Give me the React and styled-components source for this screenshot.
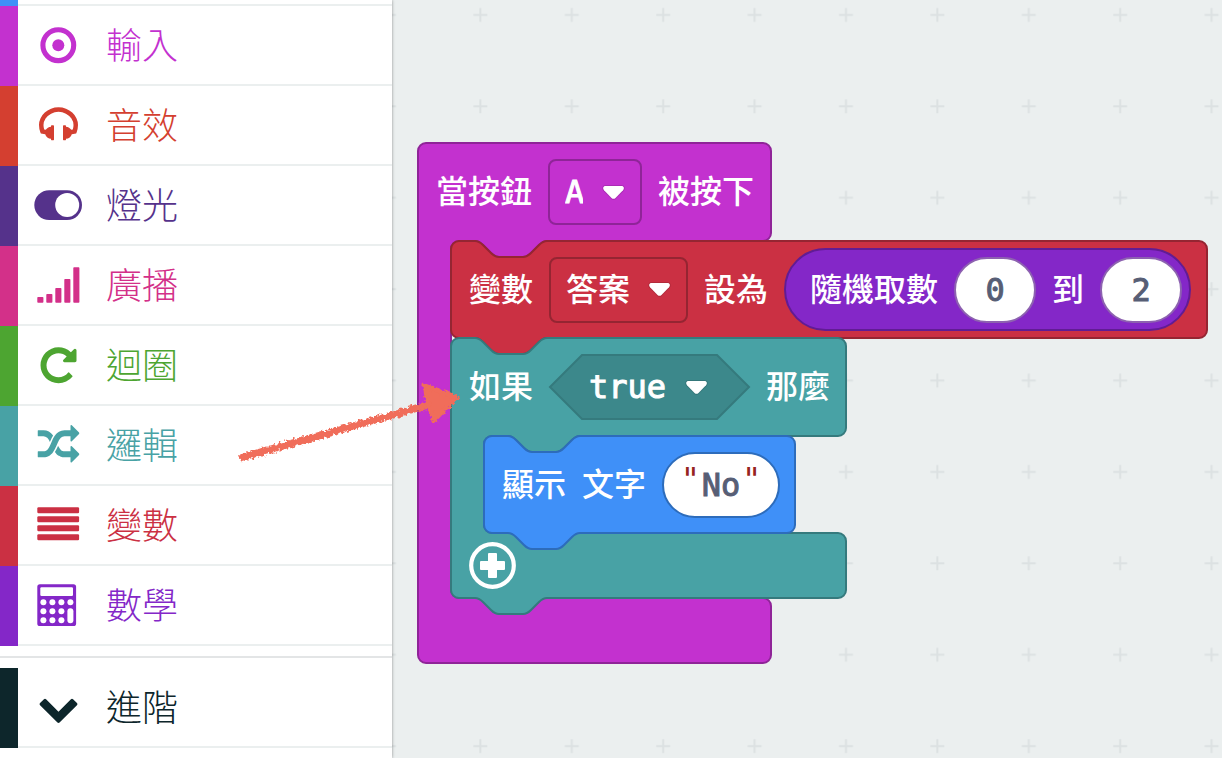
import React from "react";
import styled, { createGlobalStyle } from "styled-components";

const GlobalStyle = createGlobalStyle`
  *, *::before, *::after { box-sizing: border-box; }
  body { margin: 0; background: #ebefef; }
  button, input, select { font: inherit; color: inherit; }
`;

const UI_FONT = `"Noto Sans CJK TC", sans-serif`;
const BLOCK_FONT = `"DejaVu Sans Mono", "Noto Sans CJK TC", monospace`;

const colors = {
  basic: { fill: "#3f90f8", edge: "#2d6cbb" },
  input: { fill: "#c331cf", edge: "#8f2498" },
  music: { fill: "#d43f30" },
  led: { fill: "#55328b" },
  radio: { fill: "#d33089" },
  loops: { fill: "#4da531" },
  logic: { fill: "#48a2a5", edge: "#357a7d" },
  variables: { fill: "#cb3043", edge: "#952532" },
  math: { fill: "#8427c8", edge: "#611c94" },
  advanced: { fill: "#0d262b" },
};

/* ---------- page ---------- */

const Page = styled.div`
  position: relative;
  display: flex;
  min-height: 100vh;
  overflow: hidden;
`;

const Toolbox = styled.nav`
  position: relative;
  z-index: 1;
  flex: 0 0 392px;
  display: flex;
  flex-direction: column;
  background: #fff;
  box-shadow: 0 0 3px rgba(0, 0, 0, 0.4);
  font-family: ${UI_FONT};
`;

const PreviousRow = styled.div`
  height: 6px;
  border-left: 18px solid ${(p) => p.$color};
  box-shadow: inset 0 -2px #ebefef;
`;

const Category = styled.button`
  display: flex;
  align-items: stretch;
  height: 80px;
  padding: 0;
  border: 0;
  background: none;
  color: ${(p) => p.$color};
  text-align: left;
  cursor: pointer;
`;

const Strip = styled.span`
  flex: 0 0 18px;
  background: currentColor;
`;

const CategoryBody = styled.span`
  flex: 1;
  display: flex;
  align-items: center;
  gap: 24px;
  padding-left: 16px;
  border-bottom: 2px solid #ebefef;
`;

const CategoryName = styled.span`
  padding-bottom: 4px;
  font-size: 36px;
  line-height: 48px;
  font-weight: 300;
`;

const Divider = styled.hr`
  width: 100%;
  height: 2px;
  margin: 10px 0;
  border: 0;
  background: #e3e5e6;
`;

const Workspace = styled.main`
  position: relative;
  flex: 1;
  min-width: 0;
  overflow: hidden;
  background: #ebefef;
  font-family: ${BLOCK_FONT};
`;

const GridSvg = styled.svg`
  position: absolute;
  inset: 0;
  width: 100%;
  height: 100%;
`;

const Placed = styled.div`
  position: absolute;
  left: ${(p) => p.$x}px;
  top: ${(p) => p.$y}px;
`;

/* ---------- blocks ---------- */

const BlockFrame = styled.section`
  position: relative;
  isolation: isolate;
  width: ${(p) => p.$width}px;
  color: #fff;
`;

const ShapeSvg = styled.svg`
  position: absolute;
  left: 0;
  top: 0;
  z-index: -1;
  width: 100%;
  height: 100%;
  overflow: visible;
  fill: ${(p) => p.$tone.fill};
  stroke: ${(p) => p.$tone.edge};
  stroke-width: 2;
`;

const BlockRow = styled.div`
  display: flex;
  align-items: center;
  gap: 16px;
  height: ${(p) => p.$height}px;
  padding-left: 18px;
`;

const Mouth = styled.div`
  padding-left: 33px;
`;

const Label = styled.span`
  flex: none;
  font-size: 32px;
  line-height: 48px;
  font-weight: 500;
  white-space: nowrap;
`;

const Field = styled.label`
  position: relative;
  isolation: isolate;
  flex: none;
  display: flex;
  align-items: center;
`;

const Select = styled.select`
  appearance: none;
  height: 66px;
  margin: 0;
  padding: ${(p) => (p.$hex ? "0 64px 0 40px" : "0 57px 0 15px")};
  width: ${(p) => p.$width}px;
  border: ${(p) => (p.$hex ? "0" : `2px solid ${p.$tone.edge}`)};
  border-radius: 8px;
  background: none;
  font-size: 32px;
  line-height: 48px;
  font-weight: 500;
  -webkit-text-stroke: ${(p) => (p.$cjk ? 0 : 1)}px currentColor;
`;

const Caret = styled.svg`
  position: absolute;
  right: ${(p) => (p.$hex ? 43 : 18)}px;
  width: 21px;
  height: 13px;
  overflow: visible;
  fill: #fff;
  pointer-events: none;
`;

const Reporter = styled.div`
  flex: none;
  display: flex;
  align-items: center;
  gap: 16px;
  height: 83px;
  padding: 0 7px 0 24px;
  border: 2px solid ${colors.math.edge};
  border-radius: 42px;
  background: ${colors.math.fill};
`;

const NumberInput = styled.input`
  width: 82px;
  height: 66px;
  padding: 0;
  border: 2px solid #8d62b0;
  border-radius: 33px;
  background: #fff;
  color: #575e75;
  font-size: 32px;
  font-weight: 500;
  -webkit-text-stroke: 1px currentColor;
  text-align: center;
`;

const TextPill = styled.label`
  flex: none;
  display: flex;
  align-items: center;
  justify-content: center;
  width: 118px;
  height: 66px;
  border: 2px solid ${colors.basic.edge};
  border-radius: 33px;
  background: #fff;
  color: #575e75;
  font-size: 32px;
`;

const Quote = styled.span`
  padding-bottom: 12px;
  color: #962420;
  font-weight: 400;
`;

const TextInput = styled.input`
  width: 42px;
  padding: 0;
  border: 0;
  background: none;
  -webkit-text-stroke: 1px currentColor;
  text-align: center;
`;

const AddButton = styled.button`
  display: flex;
  padding: 0;
  border: 0;
  background: none;
  cursor: pointer;
`;

const ArrowSvg = styled.svg`
  position: absolute;
  left: 230px;
  top: 370px;
  z-index: 2;
  width: 240px;
  height: 100px;
  pointer-events: none;
`;

/* ---------- toolbox icons ---------- */

const glyphs = {
  headphones:
    "M1728 886q0 166-60 314l-20 49-185 33q-22 83-90.500 136.500t-156.500 53.500v32q0 14-9 23t-23 9h-64q-14 0-23-9t-9-23v-576q0-14 9-23t23-9h64q14 0 23 9t9 23v32q71 0 130 35.500t93 95.500l68-12q29-95 29-193 0-148-88-279t-236.500-209-315.500-78-315.500 78-236.500 209-88 279q0 98 29 193l68 12q34-60 93-95.500t130-35.500v-32q0-14 9-23t23-9h64q14 0 23 9t9 23v576q0 14-9 23t-23 9h-64q-14 0-23-9t-9-23v-32q-88 0-156.500-53.500t-90.500-136.500l-185-33-20-49q-60-148-60-314 0-151 67-291t179-242.500 266-163.500 320-61 320 61 266 163.500 179 242.500 67 291z",
  redo: "M1664 256v448q0 26-19 45t-45 19h-448q-42 0-59-40-17-39 14-69l138-138q-148-137-349-137-104 0-198.500 40.500t-163.500 109.500-109.500 163.500-40.500 198.500 40.500 198.500 109.500 163.500 163.500 109.500 198.500 40.500q119 0 225-52t179-147q7-10 23-12 15 0 25 9l137 138q9 8 9.500 20.500t-7.500 22.500q-109 132-264 204.500t-327 72.500q-156 0-298-61t-245-164-164-245-61-298 61-298 164-245 245-164 298-61q147 0 284.500 55.500t244.500 156.500l130-129q29-31 70-14 39 17 39 59z",
  random:
    "M666 481q-60 92-137 273-22-45-37-72.500t-40.500-63.500-51-56.500-63-35-81.500-14.500h-224q-14 0-23-9t-9-23v-192q0-14 9-23t23-9h224q250 0 410 225zm1126 799q0 14-9 23l-320 320q-9 9-23 9-13 0-22.500-9.500t-9.500-22.500v-192q-32 0-85 .5t-81 1-73-1-71-5-64-10.500-63-18.500-58-28.500-59-40-55-53.500-56-69.500q59-93 136-273 22 45 37 72.500t40.500 63.500 51 56.500 63 35 81.500 14.500h256v-192q0-14 9-23t23-9q12 0 24 10l319 319q9 9 9 23zm0-896q0 14-9 23l-320 320q-9 9-23 9-13 0-22.500-9.500t-9.500-22.500v-192h-256q-48 0-87 15t-69 45-51 61.500-45 77.500q-32 62-78 171-29 66-49.500 111t-54 105-64 100-74 83-90 68.500-106.500 42-128 16.500h-224q-14 0-23-9t-9-23v-192q0-14 9-23t23-9h224q48 0 87-15t69-45 51-61.500 45-77.500q32-62 78-171 29-66 49.500-111t54-105 64-100 74-83 90-68.500 106.500-42 128-16.500h256v-192q0-14 9-23t23-9q12 0 24 10l319 319q9 9 9 23z",
  chevron:
    "M1683 808l-742 741q-19 19-45 19t-45-19l-742-741q-19-19-19-45.500t19-45.500l166-165q19-19 45-19t45 19l531 531 531-531q19-19 45-19t45 19l166 165q19 19 19 45.500t-19 45.500z",
};

function Glyph({ name }) {
  return (
    <svg x="3.5" y="3.3" width="42" height="42" viewBox="0 0 1792 1792">
      <path d={glyphs[name]} />
    </svg>
  );
}

const iconArt = {
  dot: (
    <>
      <circle cx="24.3" cy="24.2" r="15.4" fill="none" stroke="currentColor" strokeWidth="5.1" />
      <circle cx="24.3" cy="24.2" r="6" />
    </>
  ),
  headphones: <Glyph name="headphones" />,
  toggle: (
    <>
      <rect x="0.3" y="9.2" width="47.700" height="29.800" rx="14.900" />
      <circle cx="33.200" cy="24.100" r="12" fill="#fff" />
    </>
  ),
  signal: (
    <>
      {[5.700, 8.700, 14.700, 23.700, 35.500].map((h, i) => (
        <rect key={i} x={3.3 + i * 9} y={41.700 - h} width="6.100" height={h} rx="0.8" />
      ))}
    </>
  ),
  redo: <Glyph name="redo" />,
  random: <Glyph name="random" />,
  bars: (
    <>
      {[0, 1, 2, 3].map((i) => (
        <rect key={i} x="3.3" y={6.300 + i * 9} width="41.800" height="6" rx="1.200" />
      ))}
    </>
  ),
  calculator: (
    <>
      <rect x="3.3" y="3.200" width="38.800" height="41.800" rx="2.600" />
      <g fill="#fff">
        <rect x="6.300" y="6.200" width="32.700" height="8.800" rx="1.200" />
        {[0, 1, 2, 3].map((c) =>
          [0, 1, 2].map((r) =>
            c === 3 && r > 0 ? null : (
              <circle key={`${c}-${r}`} cx={9.400 + c * 9} cy={21.300 + r * 9} r="3" />
            )
          )
        )}
        <rect x="33.400" y="27.300" width="6" height="15" rx="3" />
      </g>
    </>
  ),
  chevron: <Glyph name="chevron" />,
};

function CategoryIcon({ name }) {
  return (
    <svg width="48" height="48" viewBox="0 0 48 48" fill="currentColor" aria-hidden="true">
      {iconArt[name]}
    </svg>
  );
}

function CategoryRow({ name, icon, tone }) {
  return (
    <Category type="button" $color={colors[tone].fill}>
      <Strip />
      <CategoryBody>
        <CategoryIcon name={icon} />
        <CategoryName>{name}</CategoryName>
      </CategoryBody>
    </Category>
  );
}

const categories = [
  { name: "輸入", icon: "dot", tone: "input" },
  { name: "音效", icon: "headphones", tone: "music" },
  { name: "燈光", icon: "toggle", tone: "led" },
  { name: "廣播", icon: "signal", tone: "radio" },
  { name: "迴圈", icon: "redo", tone: "loops" },
  { name: "邏輯", icon: "random", tone: "logic" },
  { name: "變數", icon: "bars", tone: "variables" },
  { name: "數學", icon: "calculator", tone: "math" },
];

/* ---------- block outlines ---------- */

const R = 8;
const INSET = 33;
const NOTCH = "c4,0 6,2 8,4 l8,8 c2,2 4,4 8,4 h24 c4,0 6,-2 8,-4 l8,-8 c2,-2 4,-4 8,-4";
const TAB = "c-4,0 -6,2 -8,4 l-8,8 c-2,2 -4,4 -8,4 h-24 c-4,0 -6,-2 -8,-4 l-8,-8 c-2,-2 -4,-4 -8,-4";

function outline({ width, head, mouth = 0, foot = 0, hat = false }) {
  const top = `M0,${R} a${R},${R} 0 0 1 ${R},${-R} ${hat ? "" : `H24 ${NOTCH}`} H${width - R} a${R},${R} 0 0 1 ${R},${R}`;
  const corner = (y) => `V${y - R} a${R},${R} 0 0 1 ${-R},${R}`;
  const tabEnd = (x) => `H${x + 96} ${TAB}`;
  const total = head + mouth + foot;
  let d = `${top} ${corner(head)}`;
  if (mouth) {
    d += ` ${tabEnd(INSET)} H${INSET + R} a${R},${R} 0 0 0 ${-R},${R}`;
    d += ` V${head + mouth - R} a${R},${R} 0 0 0 ${R},${R} H${width - R} a${R},${R} 0 0 1 ${R},${R} ${corner(total)}`;
  }
  if (!hat) d += ` ${tabEnd(0)}`;
  return `${d} H${R} a${R},${R} 0 0 1 ${-R},${-R} Z`;
}

function Block({ tone, width, head, mouth, foot, hat, children }) {
  return (
    <BlockFrame $width={width}>
      <ShapeSvg $tone={colors[tone]} aria-hidden="true">
        <path d={outline({ width, head, mouth, foot, hat })} />
      </ShapeSvg>
      {children}
    </BlockFrame>
  );
}

function Dropdown({ label, value, tone, width, hex, cjk }) {
  return (
    <Field aria-label={label}>
      {hex && (
        <ShapeSvg $tone={{ fill: "#3c888b", edge: colors.logic.edge }} aria-hidden="true">
          <path d="M1,33 L33,1 H168 L200,33 L168,65 H33 Z" />
        </ShapeSvg>
      )}
      <Select aria-label={label} $tone={colors[tone]} $width={width} $hex={hex} $cjk={cjk} defaultValue={value}>
        <option>{value}</option>
      </Select>
      <Caret $hex={hex} viewBox="0 0 21 13" aria-hidden="true">
        <path
          d="M2.500,0 H18.500 C21,0 21.500,2.500 20,4.200 L12.500,11.900 Q10.500,13.800 8.500,11.900 L1,4.200 C-0.500,2.500 0,0 2.500,0 Z"
          stroke="#000"
          strokeOpacity="0.120"
          strokeWidth="2"
          paintOrder="stroke"
        />
      </Caret>
    </Field>
  );
}

function Grid() {
  return (
    <GridSvg aria-hidden="true">
      <defs>
        <pattern id="plus-grid" x="-49" y="-31" width="91.400" height="91.400" patternUnits="userSpaceOnUse">
          <path d="M39,46 H53 M46,39 V53" stroke="#dce1e2" strokeWidth="2" fill="none" />
        </pattern>
      </defs>
      <rect width="100%" height="100%" fill="url(#plus-grid)" />
    </GridSvg>
  );
}

function CrayonArrow() {
  return (
    <ArrowSvg viewBox="0 0 240 100" aria-hidden="true">
      <defs>
        <filter id="crayon" x="-5%" y="-10%" width="110%" height="120%">
          <feTurbulence type="fractalNoise" baseFrequency="0.350" numOctaves="2" seed="4" result="n" />
          <feDisplacementMap in="SourceGraphic" in2="n" scale="6" xChannelSelector="R" yChannelSelector="G" />
        </filter>
      </defs>
      <g filter="url(#crayon)" fill="#f06d5a" stroke="#f06d5a">
        <path d="M10,88 L198,35" strokeWidth="7.500" fill="none" />
        <path d="M195,16 L226,27 L204,50 L199,36 Z" strokeWidth="5" strokeLinejoin="round" />
      </g>
    </ArrowSvg>
  );
}

export default function App() {
  return (
    <>
      <GlobalStyle />
      <Page>
        <Toolbox aria-label="積木分類">
          <PreviousRow $color={colors.basic.fill} />
          {categories.map((c) => (
            <CategoryRow key={c.name} {...c} />
          ))}
          <Divider />
          <CategoryRow name="進階" icon="chevron" tone="advanced" />
        </Toolbox>

        <Workspace>
          <Grid />
          <Placed $x={825} $y={-17}>
            <Block tone="basic" width={354} head={98} mouth={33} foot={66} hat />
          </Placed>
          <Placed $x={26} $y={143}>
            <Block tone="input" width={353} head={98} mouth={357} foot={65} hat>
              <BlockRow $height={98}>
                <Label>當按鈕</Label>
                <Dropdown label="按鈕" value="A" tone="input" width={94} />
                <Label>被按下</Label>
              </BlockRow>
              <Mouth>
                <Block tone="variables" width={756} head={97}>
                  <BlockRow $height={97}>
                    <Label>變數</Label>
                    <Dropdown label="變數名稱" value="答案" tone="variables" width={139} cjk />
                    <Label>設為</Label>
                    <Reporter>
                      <Label>隨機取數</Label>
                      <NumberInput aria-label="最小值" defaultValue="0" />
                      <Label>到</Label>
                      <NumberInput aria-label="最大值" defaultValue="2" />
                    </Reporter>
                  </BlockRow>
                </Block>
                <Block tone="logic" width={395} head={98} mouth={97} foot={65}>
                  <BlockRow $height={98}>
                    <Label>如果</Label>
                    <Dropdown label="條件" value="true" tone="logic" width={201} hex />
                    <Label>那麼</Label>
                  </BlockRow>
                  <Mouth>
                    <Block tone="basic" width={311} head={97}>
                      <BlockRow $height={97}>
                        <Label>顯示</Label>
                        <Label>文字</Label>
                        <TextPill>
                          <Quote>"</Quote>
                          <TextInput aria-label="文字內容" defaultValue="No" />
                          <Quote>"</Quote>
                        </TextPill>
                      </BlockRow>
                    </Block>
                  </Mouth>
                  <BlockRow $height={65}>
                    <AddButton type="button" aria-label="新增條件">
                      <svg width="47" height="47" viewBox="0 0 47 47" aria-hidden="true">
                        <circle cx="23.500" cy="23.500" r="21.300" fill="none" stroke="#fff" strokeWidth="4.200" />
                        <path
                          d="M20,11 h7 q1,0 1,1 v7 h7 q1,0 1,1 v7 q0,1 -1,1 h-7 v7 q0,1 -1,1 h-7 q-1,0 -1,-1 v-7 h-7 q-1,0 -1,-1 v-7 q0,-1 1,-1 h7 v-7 q0,-1 1,-1 Z"
                          fill="#fff"
                        />
                      </svg>
                    </AddButton>
                  </BlockRow>
                </Block>
              </Mouth>
              <BlockRow $height={65} />
            </Block>
          </Placed>
        </Workspace>
        <CrayonArrow />
      </Page>
    </>
  );
}
